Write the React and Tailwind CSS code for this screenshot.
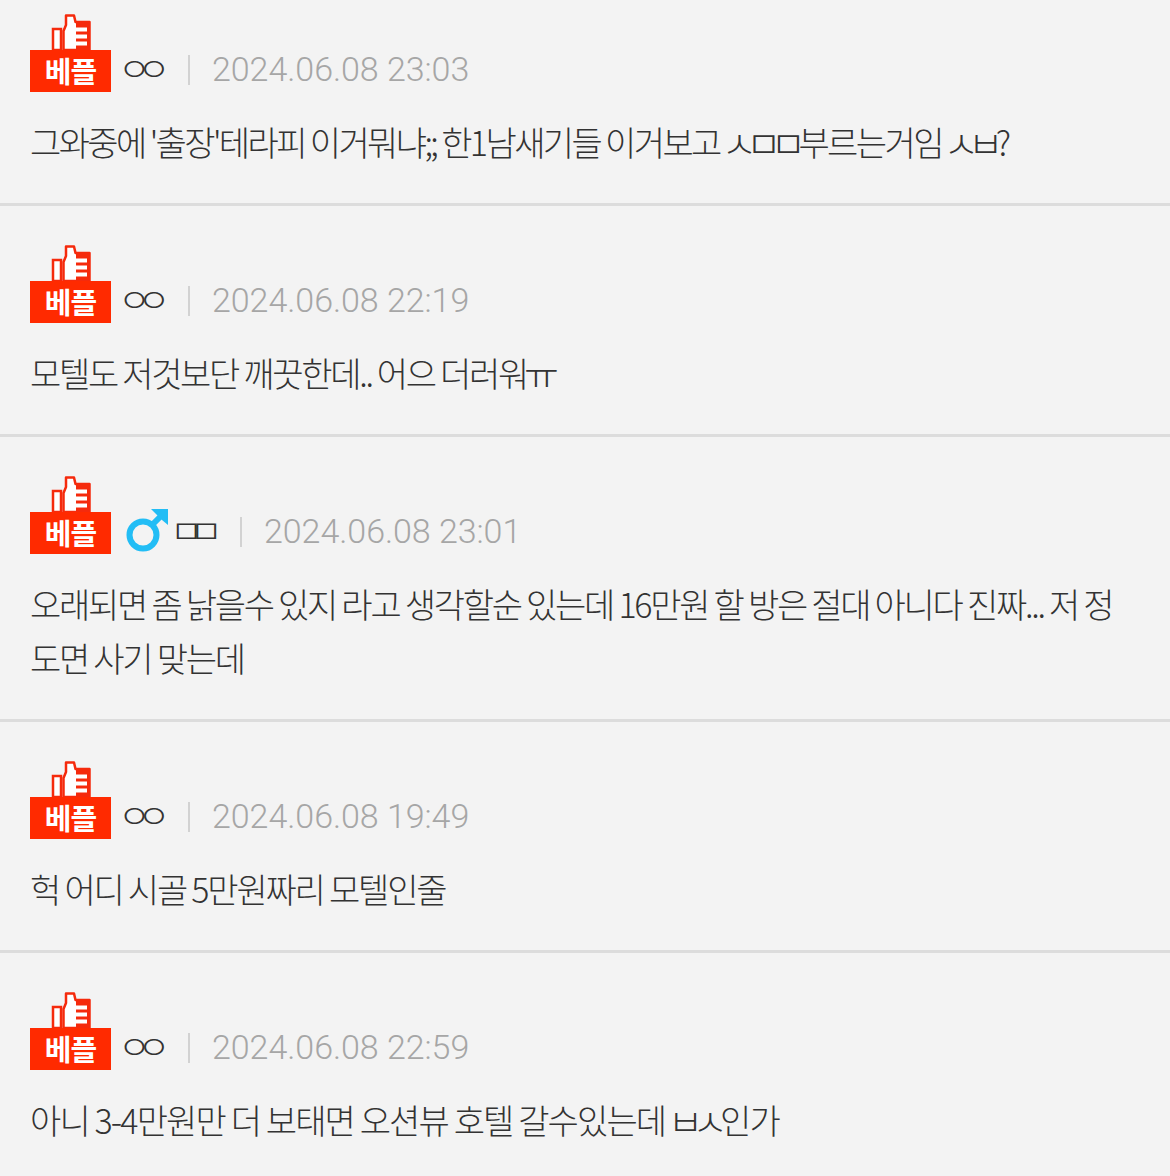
import React from 'react';

const comments = [
  { name: 'ㅇㅇ', date: '2024.06.08 23:03', text: "그와중에 '출장'테라피 이거뭐냐;; 한1남새기들 이거보고 ㅅㅁㅁ부르는거임 ㅅㅂ?", first: true, tracking: 'tracking-[-2.6px]' },
  { name: 'ㅇㅇ', date: '2024.06.08 22:19', text: '모텔도 저것보단 깨끗한데.. 어으 더러워ㅠ', tracking: 'tracking-[-2.3px]' },
  { name: 'ㅁㅁ', date: '2024.06.08 23:01', male: true, text: '오래되면 좀 낡을수 있지 라고 생각할순 있는데 16만원 할 방은 절대 아니다 진짜... 저 정도면 사기 맞는데', tracking: 'tracking-[-2.25px]' },
  { name: 'ㅇㅇ', date: '2024.06.08 19:49', text: '헉 어디 시골 5만원짜리 모텔인줄', tracking: 'tracking-[-2.2px]' },
  { name: 'ㅇㅇ', date: '2024.06.08 22:59', text: '아니 3-4만원만 더 보태면 오션뷰 호텔 갈수있는데 ㅂㅅ인가', last: true, tracking: 'tracking-[-1.85px]' },
];

const BestBadge = () => (
  <div className="flex flex-col items-center w-[81px] shrink-0">
    <svg width="40" height="36" viewBox="0 0 40 36" className="block">
      <rect x="2" y="15" width="8" height="21" fill="#fff" stroke="#f52a0c" strokeWidth="2.5" />
      <path d="M12.5 36V17L15 11V1.5H23L24.5 8H38.5V36Z" fill="#fff" stroke="#f52a0c" strokeWidth="2.5" strokeLinejoin="round" />
      <path d="M25 9H38V36H25Z" fill="#f52a0c" />
      <path d="M25 15.5H36M25 22.5H36M25 29.5H36" stroke="#fff" strokeWidth="4" fill="none" />
    </svg>
    <div className="w-[81px] h-[42px] bg-[#ff2a00] flex items-center justify-center text-white text-[29px] font-bold tracking-[-1px] leading-none pb-[2px]">
      베플
    </div>
  </div>
);

const MaleIcon = () => (
  <svg width="44" height="44" viewBox="0 0 44 44" className="shrink-0 ml-[14px] mb-[2px]">
    <circle cx="18" cy="27" r="13.5" fill="none" stroke="#22bdf5" strokeWidth="6" />
    <path d="M27 17 37 7" stroke="#22bdf5" strokeWidth="6" fill="none" />
    <path d="M26 1h17v16l-6-5-6-6Z" fill="#22bdf5" />
  </svg>
);

// standalone jamo are drawn wider in the reference font than in Noto
const JamoText = ({ text }) =>
  text.split(/([ㄱ-ㅎㅏ-ㅣ]+)/).map((part, i) =>
    /^[ㄱ-ㅎㅏ-ㅣ]+$/.test(part) ? (
      <span key={i} className="text-[38px] leading-none tracking-[-10.4px] ml-[-3px] mr-[3px] align-[-2px]">
        {part}
      </span>
    ) : (
      <span key={i}>{part}</span>
    )
  );

const Comment = ({ name, date, text, male, first, last, tracking }) => (
  <div className={`pl-[30px] pr-[36px] ${first ? 'pt-[14px] h-[206px]' : 'pt-[39px]'} ${last ? '' : 'border-b-[3px] border-[#dcdcdc]'} ${!first && !last ? 'pb-[34px]' : ''}`}>
    <div className="flex items-end h-[78px]">
      <BestBadge />
      {male && <MaleIcon />}
      <span className={`text-[#333] text-[32px] leading-[44px] font-light tracking-[-12px] w-[40px] mb-[3px] shrink-0 origin-left scale-x-[1.12] ${male ? 'ml-[1px]' : 'ml-[7px]'}`}>{name}</span>
      <span className="w-[2px] h-[30px] bg-[#d2d2d2] ml-[30px] mb-[7px]" />
      <span className="ml-[22px] mb-[1px] text-[#a6a6a6] text-[34px] leading-[44px] font-light font-['Roboto'] tracking-[-0.05px]">{date}</span>
    </div>
    <p className={`mt-[23px] text-[#333] text-[34px] leading-[54px] font-light ${tracking}`}>
      <JamoText text={text} />
    </p>
  </div>
);

export default function App() {
  return (
    <div className="h-[1176px] overflow-hidden bg-[#f3f3f3] font-['Noto_Sans_CJK_KR',sans-serif]">
      {comments.map((c) => (
        <Comment key={c.date} {...c} />
      ))}
    </div>
  );
}
